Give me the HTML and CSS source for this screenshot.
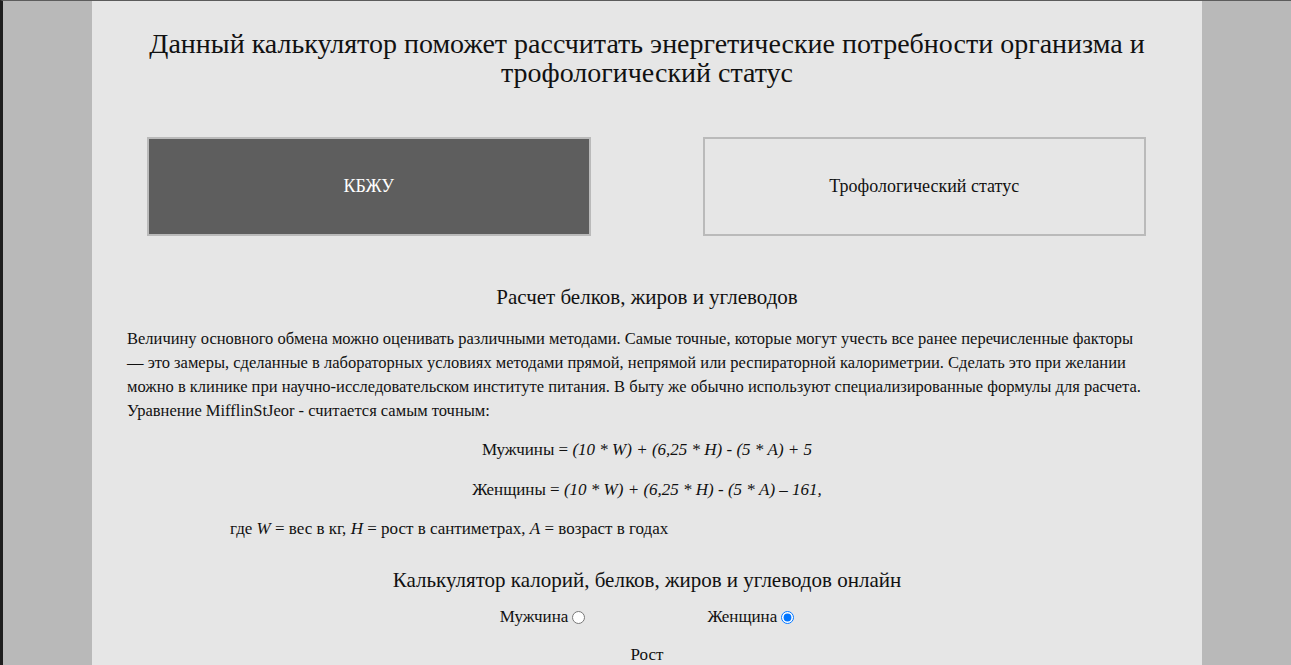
FILE: index.html
```html
<!DOCTYPE html>
<html lang="ru">
<head>
<meta charset="utf-8">
<title>Калькулятор</title>
<link rel="stylesheet" href="styles.css">
</head>
<body>
<div class="page">
  <h1 class="title">Данный калькулятор поможет рассчитать энергетические потребности организма и трофологический статус</h1>
  <div class="tabs">
    <div class="tab tab-active">КБЖУ</div>
    <div class="tab">Трофологический статус</div>
  </div>
  <h2 class="subtitle">Расчет белков, жиров и углеводов</h2>
  <p class="text">Величину основного обмена можно оценивать различными методами. Самые точные, которые могут учесть все ранее перечисленные факторы —&nbsp;это замеры, сделанные в лабораторных условиях методами прямой, непрямой или респираторной калориметрии. Сделать это при желании можно в клинике при научно-исследовательском институте питания. В быту же обычно используют специализированные формулы для расчета. Уравнение MifflinStJeor - считается самым точным:</p>
  <p class="formula">Мужчины = <i>(10 * W) + (6,25 * H) - (5 * A) + 5</i></p>
  <p class="formula formula-second">Женщины = <i>(10 * W) + (6,25 * H) - (5 * A) – 161,</i></p>
  <p class="legend">где <i>W</i> = вес в кг, <i>H</i> = рост в сантиметрах, <i>A</i> = возраст в годах</p>
  <h2 class="subtitle calc-title">Калькулятор калорий, белков, жиров и углеводов онлайн</h2>
  <div class="gender">
    <label class="gender-option">Мужчина <input type="radio" name="gender"></label>
    <label class="gender-option">Женщина <input type="radio" name="gender" checked></label>
  </div>
  <div class="field-label">Рост</div>
</div>
</body>
</html>
```
FILE: styles.css
```css
html {
  background: #b9b9b9;
}
body {
  margin: 0;
  min-height: 664px;
  border-top: 1px solid #5c5c5c;
  border-left: 3px solid #1e1e1e;
  font-family: "Liberation Serif", "Times New Roman", serif;
  color: #111;
  overflow: hidden;
}
.page {
  width: 1110px;
  margin: 0 auto;
  background: #e6e6e6;
  min-height: 664px;
  padding: 28px 0 0;
  box-sizing: border-box;
}
.title {
  margin: 0 auto;
  width: 1010px;
  text-align: center;
  font-size: 28px;
  font-weight: normal;
  line-height: 29px;
}
.tabs {
  display: grid;
  grid-template-columns: 1fr 1fr;
  gap: 112px;
  padding: 0 56px 0 55px;
  margin-top: 50px;
}
.tab {
  height: 99px;
  box-sizing: border-box;
  border: 2px solid #bababa;
  display: flex;
  align-items: center;
  justify-content: center;
  font-size: 18px;
  color: #111;
}
.tab-active {
  background: #5e5e5e;
  color: #fff;
}
.subtitle {
  margin: 50px 0 0;
  text-align: center;
  font-size: 21px;
  font-weight: normal;
  line-height: 23px;
}
.text {
  margin: 18px 0 0;
  padding: 0 40px 0 35px;
  font-size: 16.5px;
  line-height: 24px;
}
.formula {
  margin: 15px 0 0;
  text-align: center;
  font-size: 17px;
  line-height: 24px;
}
.formula-second {
  margin-top: 16px;
}
.legend {
  margin: 15px 0 0;
  padding-left: 138px;
  font-size: 17px;
  line-height: 24px;
}
.calc-title {
  margin-top: 28px;
}
.gender {
  display: flex;
  justify-content: center;
  gap: 122px;
  margin-top: 13px;
  font-size: 17px;
  line-height: 24px;
}
.gender-option {
  display: flex;
  align-items: center;
}
.gender-option input {
  margin: 0 0 0 4px;
  width: 13px;
  height: 13px;
}
.field-label {
  margin-top: 14px;
  text-align: center;
  font-size: 17px;
  line-height: 24px;
}
```
